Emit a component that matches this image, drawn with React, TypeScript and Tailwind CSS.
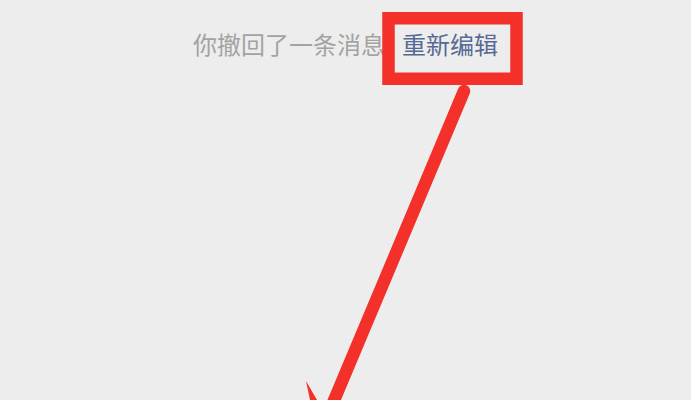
import React from "react";

const Annotation = () => (
  <svg
    className="absolute inset-0 pointer-events-none"
    width="691"
    height="400"
    viewBox="0 0 691 400"
  >
    <rect
      x="388.5"
      y="18.25"
      width="128"
      height="60.5"
      fill="none"
      stroke="#f3302a"
      strokeWidth="12.5"
    />
    <line
      x1="464"
      y1="91"
      x2="330"
      y2="410"
      stroke="#f3302a"
      strokeWidth="12.5"
      strokeLinecap="round"
    />
    <polygon points="306,381 310,400 317,400" fill="#f3302a" />
  </svg>
);

const App = () => {
  return (
    <div
      className="relative h-[400px] w-full overflow-hidden bg-[#ededed]"
      style={{ fontFamily: '"Noto Sans CJK SC", "Noto Sans", sans-serif' }}
    >
      <div className="flex justify-center pt-[32px] text-[24px] leading-[24px]">
        <span className="text-[#a3a3a3]">你撤回了一条消息</span>
        <span className="ml-[17px] text-[#566a93]">重新编辑</span>
      </div>
      <Annotation />
    </div>
  );
};

export default App;
